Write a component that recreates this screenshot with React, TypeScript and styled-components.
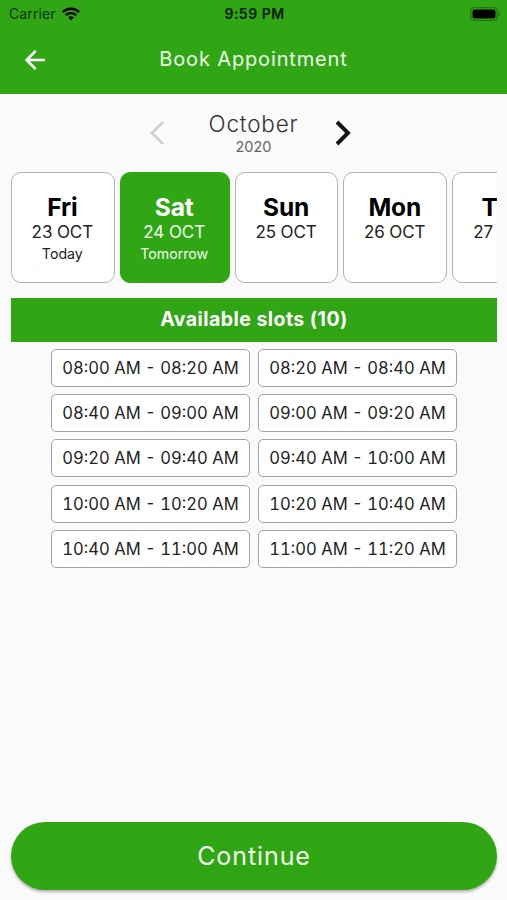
import React from "react";
import styled, { createGlobalStyle, css } from "styled-components";

const GREEN = "#30a615";

const GlobalStyle = createGlobalStyle`
  * { box-sizing: border-box; }
  body { margin: 0; background: #fafafa; font-family: Inter, "Liberation Sans", sans-serif; }
  button { font-family: inherit; padding: 0; margin: 0; border: 0; background: none; color: inherit; }
`;

const Screen = styled.main`
  width: 507px;
  height: 900px;
  display: flex;
  flex-direction: column;
  background: #fafafa;
  overflow: hidden;
`;

const Header = styled.header`
  height: 94px;
  flex: none;
  background: ${GREEN};
`;

const StatusBar = styled.div`
  height: 27px;
  display: grid;
  grid-template-columns: 1fr auto 1fr;
  align-items: center;
  padding: 0 6px 0 9px;
  color: #061a02;
`;

const Carrier = styled.div`
  display: flex;
  align-items: center;
  gap: 6px;
  font-size: 14px;
  line-height: 27px;
  letter-spacing: 0.1px;
  color: #0b3503;
`;

const Clock = styled.div`
  font-size: 14px;
  font-weight: 600;
  line-height: 27px;
  letter-spacing: 0.5px;
  margin-right: 1px;
`;

const BatteryIcon = styled.svg`
  justify-self: end;
`;

const AppBar = styled.div`
  height: 66px;
  display: grid;
  grid-template-columns: 70px 1fr 70px;
  align-items: center;
  color: #fff;
`;

const BackButton = styled.button`
  display: flex;
  justify-content: center;
`;

const Title = styled.h1`
  margin: 0 0 2px;
  text-align: center;
  font-size: 20px;
  font-weight: 400;
  line-height: 24px;
  letter-spacing: 0.85px;
  color: #eefbe9;
`;

const MonthPicker = styled.section`
  height: 78px;
  flex: none;
  padding: 16px 0 0 149px;
  display: grid;
  grid-template-columns: 58px 93px 35px 16px;
  align-items: start;
`;

const Arrow = styled.button<{ $disabled?: boolean }>`
  display: flex;
  margin-top: 10px;
  color: ${(p) => (p.$disabled ? "#d2d2d2" : "#151515")};
  ${(p) => !p.$disabled && "grid-column: 4;"}
`;

const MonthLabel = styled.div`
  display: flex;
  flex-direction: column;
  align-items: center;
`;

const Month = styled.div`
  font-size: 22.5px;
  line-height: 28px;
  font-weight: 300;
  letter-spacing: 0.8px;
  color: #333;
  white-space: nowrap;
`;

const Year = styled.div`
  font-size: 14.5px;
  line-height: 18px;
  color: #666;
`;

const Days = styled.section`
  flex: none;
  margin: 0 10px 0 11px;
  height: 111px;
  display: flex;
  gap: 5px;
  overflow: hidden;
`;

const DayCard = styled.button<{ $selected?: boolean }>`
  flex: none;
  width: 103.7px;
  height: 111px;
  padding: 20px 1px 0 0;
  display: flex;
  flex-direction: column;
  align-items: center;
  border: 1.5px solid #b3b3b3;
  border-radius: 10px;
  background: #fff;
  color: #222;
  ${(p) =>
    p.$selected &&
    css`
      width: 110px;
      border-color: ${GREEN};
      background: ${GREEN};
      color: #f2fff0;
    `}
`;

const DayName = styled.span<{ $selected?: boolean }>`
  font-size: 24.5px;
  line-height: 29px;
  font-weight: 700;
  letter-spacing: -0.2px;
  color: ${(p) => (p.$selected ? "#fff" : "#000")};
`;

const DayDate = styled.span`
  font-size: 17px;
  line-height: 21px;
  letter-spacing: -0.1px;
`;

const DayNote = styled.span`
  font-size: 14.2px;
  line-height: 21px;
  letter-spacing: 0;
`;

const SlotsBanner = styled.h2`
  flex: none;
  margin: 15px 10px 0 11px;
  height: 44px;
  background: ${GREEN};
  color: #fff;
  text-align: center;
  font-size: 19.5px;
  line-height: 43px;
  font-weight: 700;
  letter-spacing: 0.45px;
`;

const SlotGrid = styled.section`
  margin: 7px 0 0 51px;
  display: grid;
  grid-template-columns: 199px 199px;
  column-gap: 8px;
  row-gap: 7.2px;
`;

const Slot = styled.button`
  height: 38px;
  border: 1px solid #a3a3a3;
  border-radius: 5px;
  background: #fff;
  color: #222;
  font-size: 16.6px;
  font-variant-numeric: tabular-nums;
  letter-spacing: 0;
  white-space: nowrap;
`;

const ContinueButton = styled.button`
  flex: none;
  margin: auto 10px 10px 11px;
  height: 68px;
  border-radius: 34px;
  background: ${GREEN};
  color: #f0ffed;
  font-size: 25px;
  font-weight: 400;
  letter-spacing: 0.9px;
  box-shadow: 0 2px 3px rgba(0, 0, 0, 0.3);
`;

const days = [
  { name: "Fri", date: "23 OCT", note: "Today" },
  { name: "Sat", date: "24 OCT", note: "Tomorrow", selected: true },
  { name: "Sun", date: "25 OCT" },
  { name: "Mon", date: "26 OCT" },
  { name: "Tue", date: "27 OCT" },
];

const slots = [
  "08:00 AM - 08:20 AM",
  "08:20 AM - 08:40 AM",
  "08:40 AM - 09:00 AM",
  "09:00 AM - 09:20 AM",
  "09:20 AM - 09:40 AM",
  "09:40 AM - 10:00 AM",
  "10:00 AM - 10:20 AM",
  "10:20 AM - 10:40 AM",
  "10:40 AM - 11:00 AM",
  "11:00 AM - 11:20 AM",
];

export default function App() {
  return (
    <>
      <GlobalStyle />
      <Screen>
        <Header>
          <StatusBar>
            <Carrier>
              Carrier
              <svg width="18" height="14" viewBox="0 0 18 14" fill="none" stroke="#000" strokeWidth="2.4">
                <path d="M.9 5.1a11.5 11.5 0 0 1 16.2 0" />
                <path d="M3.9 8.2a7.2 7.2 0 0 1 10.2 0" />
                <path d="M9 13.4 6.2 10.5a4 4 0 0 1 5.6 0Z" fill="#000" stroke="none" />
              </svg>
            </Carrier>
            <Clock>9:59 PM</Clock>
            <BatteryIcon width="31" height="14" viewBox="0 0 31 14">
              <rect x=".7" y=".7" width="26.6" height="12.6" rx="3.8" fill="none" stroke="#20740d" strokeWidth="1.3" />
              <rect x="2.5" y="2.5" width="23" height="9" rx="2" fill="#000" />
              <path d="M28.6 5v4.2c2-.8 2-3.4 0-4.2Z" fill="#20740d" />
            </BatteryIcon>
          </StatusBar>
          <AppBar>
            <BackButton aria-label="Back">
              <svg width="20" height="20" viewBox="0 0 20 20" fill="none" stroke="#fff" strokeWidth="2.6">
                <path d="M20 10H2M10.7.9 1.7 10l9 9.1" />
              </svg>
            </BackButton>
            <Title>Book Appointment</Title>
          </AppBar>
        </Header>
        <MonthPicker>
          <Arrow $disabled aria-label="Previous month">
            <svg width="16" height="26" viewBox="0 0 16 26" fill="none" stroke="currentColor" strokeWidth="3">
              <path d="M14 2 3 13l11 11" />
            </svg>
          </Arrow>
          <MonthLabel>
            <Month>October</Month>
            <Year>2020</Year>
          </MonthLabel>
          <Arrow aria-label="Next month">
            <svg width="16" height="26" viewBox="0 0 16 26" fill="none" stroke="currentColor" strokeWidth="3.9">
              <path d="m2 2 11 11L2 24" />
            </svg>
          </Arrow>
        </MonthPicker>
        <Days>
          {days.map((d) => (
            <DayCard key={d.name} $selected={d.selected}>
              <DayName $selected={d.selected}>{d.name}</DayName>
              <DayDate>{d.date}</DayDate>
              {d.note && <DayNote>{d.note}</DayNote>}
            </DayCard>
          ))}
        </Days>
        <SlotsBanner>Available slots (10)</SlotsBanner>
        <SlotGrid>
          {slots.map((s) => (
            <Slot key={s}>{s}</Slot>
          ))}
        </SlotGrid>
        <ContinueButton>Continue</ContinueButton>
      </Screen>
    </>
  );
}
